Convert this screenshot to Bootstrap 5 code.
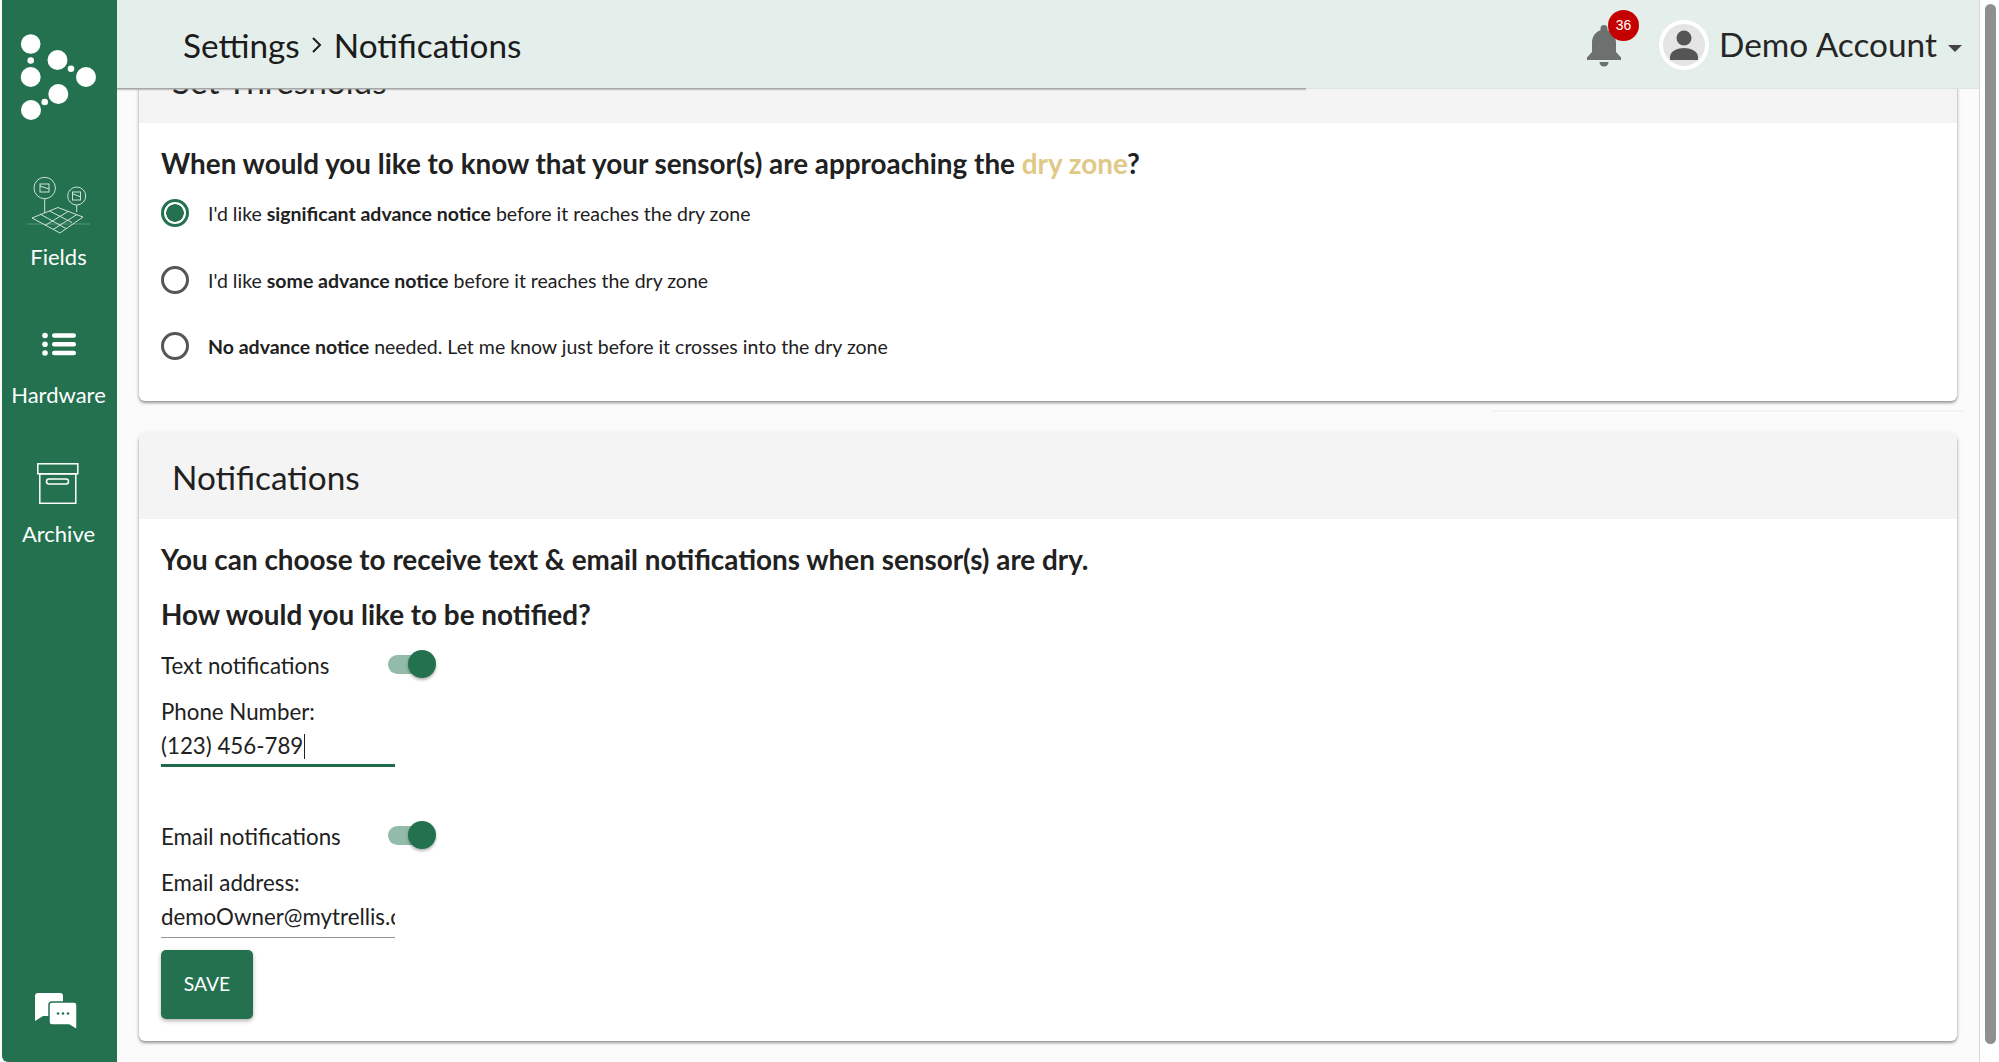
<!DOCTYPE html>
<html lang="en">
<head>
    <meta charset="UTF-8">
    <meta name="viewport" content="width=device-width, initial-scale=1.0">
    <title>Settings - Notifications</title>
    <link rel="stylesheet" href="https://cdn.jsdelivr.net/npm/bootstrap@5.3.0/dist/css/bootstrap.min.css">
    <style>
        html, body { height: 100%; overflow: hidden; }
        body { font-family: Lato, "Noto Sans", sans-serif; background: #fbfbfb; color: #212121; }
        .appShell { height: 1062px; padding-left: 2px; }
        .sideRail { width: 115px; background: #23714f; color: #fff; flex-shrink: 0; border-bottom-left-radius: 6px; }
        .railLogo { display: block; margin-top: 30px; }
        .railItem { display: block; color: #fff; text-decoration: none; font-size: 22px; line-height: 26px; text-align: center; margin-right: 2px; }
        .railFields { margin-top: 46px; }
        .railFields span { margin-top: 6px; }
        .railHardware { margin-top: 62px; }
        .railHardware span { margin-top: 24px; }
        .railArchive { margin-top: 55px; }
        .railArchive span { margin-top: 17px; }
        .railChat { margin: auto 7px 32px 0; }
        .mainCol { min-width: 0; }
        .topBar { height: 89px; background: #e4eeea; position: relative; z-index: 5; padding: 2px 17px 0 66px; flex-shrink: 0; border-bottom: 1px solid #dbe6e1; }
        .topBar::after { content: ""; position: absolute; left: 0; top: 88px; width: 1189px; height: 3px; background: linear-gradient(#9a9a9a, rgba(154,154,154,0)); }
        .pageTitle { font-size: 33.3px; font-weight: 400; color: #1b1b1b; margin: 1px 0 0; line-height: 1; }
        .titleChev { margin: 0 12px 0 10px; }
        .acctName { font-size: 33.4px; color: #262626; line-height: 1; background: none; border: 0; padding: 0; }
        .acctName.dropdown-toggle::after { margin-left: 11px; vertical-align: 5px; border-top-width: 7px; border-left-width: 7px; border-right-width: 7px; border-bottom: 0; color: #444; }
        .bellBox { width: 50px; height: 66px; position: relative; margin-right: 18px; }
        .bellIcon { position: absolute; left: -5px; top: 13px; }
        .bellDot { position: absolute; left: 17px; top: -2px; width: 31px; height: 31px; padding: 0; border-radius: 50%; background: #c40000; color: #fff; font: 400 14px/31px "Liberation Sans", sans-serif; }
        .avatarRing { width: 50px; height: 50px; border-radius: 50%; border: 4px solid #fff; background: #e4e4e4; margin-right: 10px; overflow: hidden; }
        .pageBody { padding: 0 22px; flex: 1 1 auto; overflow: hidden; }
        .setCard { border: 0; border-radius: 6px; background: #fff; box-shadow: 0 2px 3px rgba(0,0,0,.38), 0 0 6px rgba(0,0,0,.08); }
        .firstCard { margin-top: -51px; height: 363px; }
        .secondCard { margin-top: 22px; height: 607px; }
        .gapLine { height: 2px; background: #f3f3f3; margin: 9px -7px 0 1353px; }
        .setCard > .card-header { height: 85px; background: #f4f4f4; border: 0; padding: 0 0 0 33px; font-size: 33.3px; line-height: 87px; color: #212121; }
        .setCard > .card-body { padding: 0 22px; }
        .askLine { font-size: 27.85px; font-weight: 700; line-height: 34px; color: #212121; margin: 0; }
        .askThreshold { margin-top: 24px; margin-bottom: 17px; }
        .askChoose { margin-top: 24px; }
        .askHow { margin-top: 21px; margin-bottom: 14px; }
        .dryWord { color: #e0c987; }
        .radioRow { display: flex; align-items: center; margin: 0; padding: 0; min-height: 28px; font-size: 19.5px; color: #212121; }
        .radioRow + .radioRow { margin-top: 36.5px; }
        .radioRow .form-check-input { width: 28px; height: 28px; margin: 0 19px 0 0; float: none; border: 3px solid #555; background-image: none; flex-shrink: 0; }
        .radioRow .form-check-input:checked { background: radial-gradient(circle, #23714f 0 8.5px, #fff 9px); border-color: #23714f; }
        .radioRow .form-check-label { line-height: 28px; padding-top: 2px; }
        .radioRow b { font-weight: 700; }
        .optRow { display: flex; align-items: center; height: 36px; padding: 0; margin: 0; font-size: 22.3px; }
        .optMail { margin-top: 50px; }
        .optRow .form-check-label { width: 227px; padding-top: 3px; }
        .tglWrap { position: relative; width: 50px; height: 28px; display: block; }
        .tglWrap .form-check-input { width: 42px; height: 19px; margin: 5px 0 0 0; float: none; border: 0; border-radius: 10px; background: #92bba9; display: block; }
        .tglKnob { position: absolute; left: 20px; top: 0; width: 28px; height: 28px; border-radius: 50%; background: #23714f; box-shadow: 0 2px 3px rgba(0,0,0,.3); }
        .fieldLbl { font-size: 22.3px; line-height: 29px; margin: 15px 0 0; display: block; }
        .lineField { position: relative; width: 234px; }
        .lineField .form-control { width: 234px; height: 41px; padding: 0 0 2px; border: 0; border-bottom: 1px solid #949494; border-radius: 0; font-size: 22.3px; background: transparent; color: #212121; box-shadow: none; }
        .lineField .activeLine { border-bottom: 3px solid #1f6a4a; height: 41px; padding-bottom: 0; }
        .fakeCaret { position: absolute; left: 143px; top: 8px; width: 1px; height: 25px; background: #212121; }
        .saveBtn { width: 92px; height: 69px; border-radius: 5px; border: 0; background: #23714f; color: #fff; font-size: 19.3px; padding: 0; margin-top: 12px; box-shadow: 0 2px 4px rgba(0,0,0,.3); }
        .scrollTrack { width: 20px; background: #fff; border-left: 1px solid #d8d8d8; flex-shrink: 0; padding: 4px 3px 0 5px; }
        .scrollThumb { height: 1040px; background: #8f8f8f; border-radius: 6px; }
    </style>
</head>
<body>
    <div class="appShell d-flex">
        <nav class="sideRail d-flex flex-column align-items-center">
            <svg class="railLogo" width="115" height="100" viewBox="2 30 115 100" fill="#fff">
                <circle cx="30.7" cy="44" r="9.8"/><circle cx="30.7" cy="60.5" r="3.3"/><circle cx="57.5" cy="60" r="10"/>
                <circle cx="71" cy="68.7" r="3.3"/><circle cx="86" cy="77" r="10"/><circle cx="30.7" cy="77" r="10"/>
                <circle cx="58.3" cy="94" r="10"/><circle cx="44.7" cy="102" r="3.3"/><circle cx="31" cy="110" r="10"/>
            </svg>
            <a class="railItem railFields" href="#">
                <svg width="70" height="62" viewBox="24 176 70 62" fill="none" stroke="#cfe0d8" stroke-width="1" class="d-block mx-auto">
                    <circle cx="44.7" cy="188" r="10.7"/><circle cx="76.7" cy="196" r="9"/>
                    <rect x="40" y="184" width="9" height="8"/><rect x="72.5" y="192" width="8" height="8"/>
                    <path d="M40 186l9 3M73 194l8 3"/>
                    <path d="M44.7 198.7V213M76.7 205V212"/>
                    <path d="M58 207.5L83 217 60 233 32 218zM49.500 211L72 222.500M40 214L66 228.500M68 211.500L45 225.500M77 214.500L53 229.500"/>
                    <path d="M27 224H90" stroke-opacity=".3"/>
                </svg>
                <span class="d-block">Fields</span>
            </a>
            <a class="railItem railHardware" href="#">
                <svg width="34" height="26" viewBox="0 0 34 26" fill="#fff" class="d-block mx-auto">
                    <circle cx="3" cy="3.500" r="2.800"/><circle cx="3" cy="12.200" r="2.800"/><circle cx="3" cy="21" r="2.800"/>
                    <rect x="10" y="1.300" width="24" height="4.400" rx="2.200"/><rect x="10" y="10" width="24" height="4.400" rx="2.200"/><rect x="10" y="18.800" width="24" height="4.400" rx="2.200"/>
                </svg>
                <span class="d-block">Hardware</span>
            </a>
            <a class="railItem railArchive" href="#">
                <svg width="42" height="41" viewBox="0 0 42 41" fill="none" stroke="#fff" stroke-width="1.500" class="d-block mx-auto">
                    <rect x=".8" y=".8" width="40" height="10"/><rect x="2.800" y="10.800" width="36" height="29.500"/><rect x="9.500" y="16" width="22" height="5" rx="2.500"/>
                </svg>
                <span class="d-block">Archive</span>
            </a>
            <svg class="railChat" width="42" height="37" viewBox="0 0 42 37" fill="#fff">
                <path d="M3 0h22a3 3 0 0 1 3 3v17a3 3 0 0 1-3 3H8L0 28V3a3 3 0 0 1 3-3z"/>
                <path d="M17 9h22a3 3 0 0 1 3 3v25l-8-5H17a3 3 0 0 1-3-3V12a3 3 0 0 1 3-3z" stroke="#23714f" stroke-width="1.500"/>
                <circle cx="23" cy="20.500" r="1.300" fill="#23714f"/><circle cx="28" cy="20.500" r="1.300" fill="#23714f"/><circle cx="33" cy="20.500" r="1.300" fill="#23714f"/>
            </svg>
        </nav>

        <div class="mainCol d-flex flex-column flex-grow-1">
            <header class="topBar d-flex align-items-center">
                <h1 class="pageTitle d-flex align-items-center">Settings
                    <svg class="titleChev" width="12" height="18" viewBox="0 0 12 18" fill="none" stroke="#1b1b1b" stroke-width="2"><path d="M3 2l7 7-7 7"/></svg>
                    Notifications</h1>
                <div class="bellBox ms-auto">
                    <svg class="bellIcon" width="36" height="42" viewBox="0 0 36 42" fill="#6c706e">
                        <path d="M18 0a3.500 3.500 0 0 1 3.500 3.500v1.700C27 7 30 12 30 18v9l5 5.500v2.500H1v-2.500L6 27v-9c0-6 3-11 8.500-12.800V3.500A3.500 3.500 0 0 1 18 0z"/>
                        <path d="M13.500 37h9a4.500 4.500 0 0 1-9 0z"/>
                    </svg>
                    <span class="badge bellDot">36</span>
                </div>
                <div class="avatarRing">
                    <svg width="42" height="42" viewBox="0 0 42 42" fill="#555" class="d-block">
                        <circle cx="21" cy="14" r="7.500"/><path d="M7 36v-3c0-6 8-9 14-9s14 3 14 9v3z"/>
                    </svg>
                </div>
                <button class="acctName dropdown-toggle" type="button">Demo Account</button>
            </header>

            <main class="pageBody">
                <section class="card setCard firstCard">
                    <div class="card-header">Set Thresholds</div>
                    <div class="card-body">
                        <p class="askLine askThreshold">When would you like to know that your sensor(s) are approaching the <span class="dryWord">dry zone</span>?</p>
                        <div class="form-check radioRow">
                            <input class="form-check-input" type="radio" name="advance" id="adv1" checked>
                            <label class="form-check-label" for="adv1">I'd like <b>significant advance notice</b> before it reaches the dry zone</label>
                        </div>
                        <div class="form-check radioRow">
                            <input class="form-check-input" type="radio" name="advance" id="adv2">
                            <label class="form-check-label" for="adv2">I'd like <b>some advance notice</b> before it reaches the dry zone</label>
                        </div>
                        <div class="form-check radioRow">
                            <input class="form-check-input" type="radio" name="advance" id="adv3">
                            <label class="form-check-label" for="adv3"><b>No advance notice</b> needed. Let me know just before it crosses into the dry zone</label>
                        </div>
                    </div>
                </section>

                <div class="gapLine"></div>

                <section class="card setCard secondCard">
                    <div class="card-header">Notifications</div>
                    <div class="card-body">
                        <p class="askLine askChoose">You can choose to receive text &amp; email notifications when sensor(s) are dry.</p>
                        <p class="askLine askHow">How would you like to be notified?</p>
                        <div class="form-check form-switch optRow">
                            <label class="form-check-label" for="txtOn">Text notifications</label>
                            <span class="tglWrap"><input class="form-check-input" type="checkbox" id="txtOn" checked><span class="tglKnob"></span></span>
                        </div>
                        <label class="fieldLbl" for="phoneIn">Phone Number:</label>
                        <div class="lineField">
                            <input class="form-control activeLine" id="phoneIn" type="text" value="(123) 456-789">
                            <span class="fakeCaret"></span>
                        </div>
                        <div class="form-check form-switch optRow optMail">
                            <label class="form-check-label" for="mailOn">Email notifications</label>
                            <span class="tglWrap"><input class="form-check-input" type="checkbox" id="mailOn" checked><span class="tglKnob"></span></span>
                        </div>
                        <label class="fieldLbl" for="mailIn">Email address:</label>
                        <div class="lineField">
                            <input class="form-control" id="mailIn" type="text" value="demoOwner@mytrellis.com">
                        </div>
                        <button class="btn saveBtn" type="button">SAVE</button>
                    </div>
                </section>
            </main>
        </div>
        <div class="scrollTrack"><div class="scrollThumb"></div></div>
    </div>
    <script src="https://cdn.jsdelivr.net/npm/bootstrap@5.3.0/dist/js/bootstrap.bundle.min.js"></script>
</body>
</html>
